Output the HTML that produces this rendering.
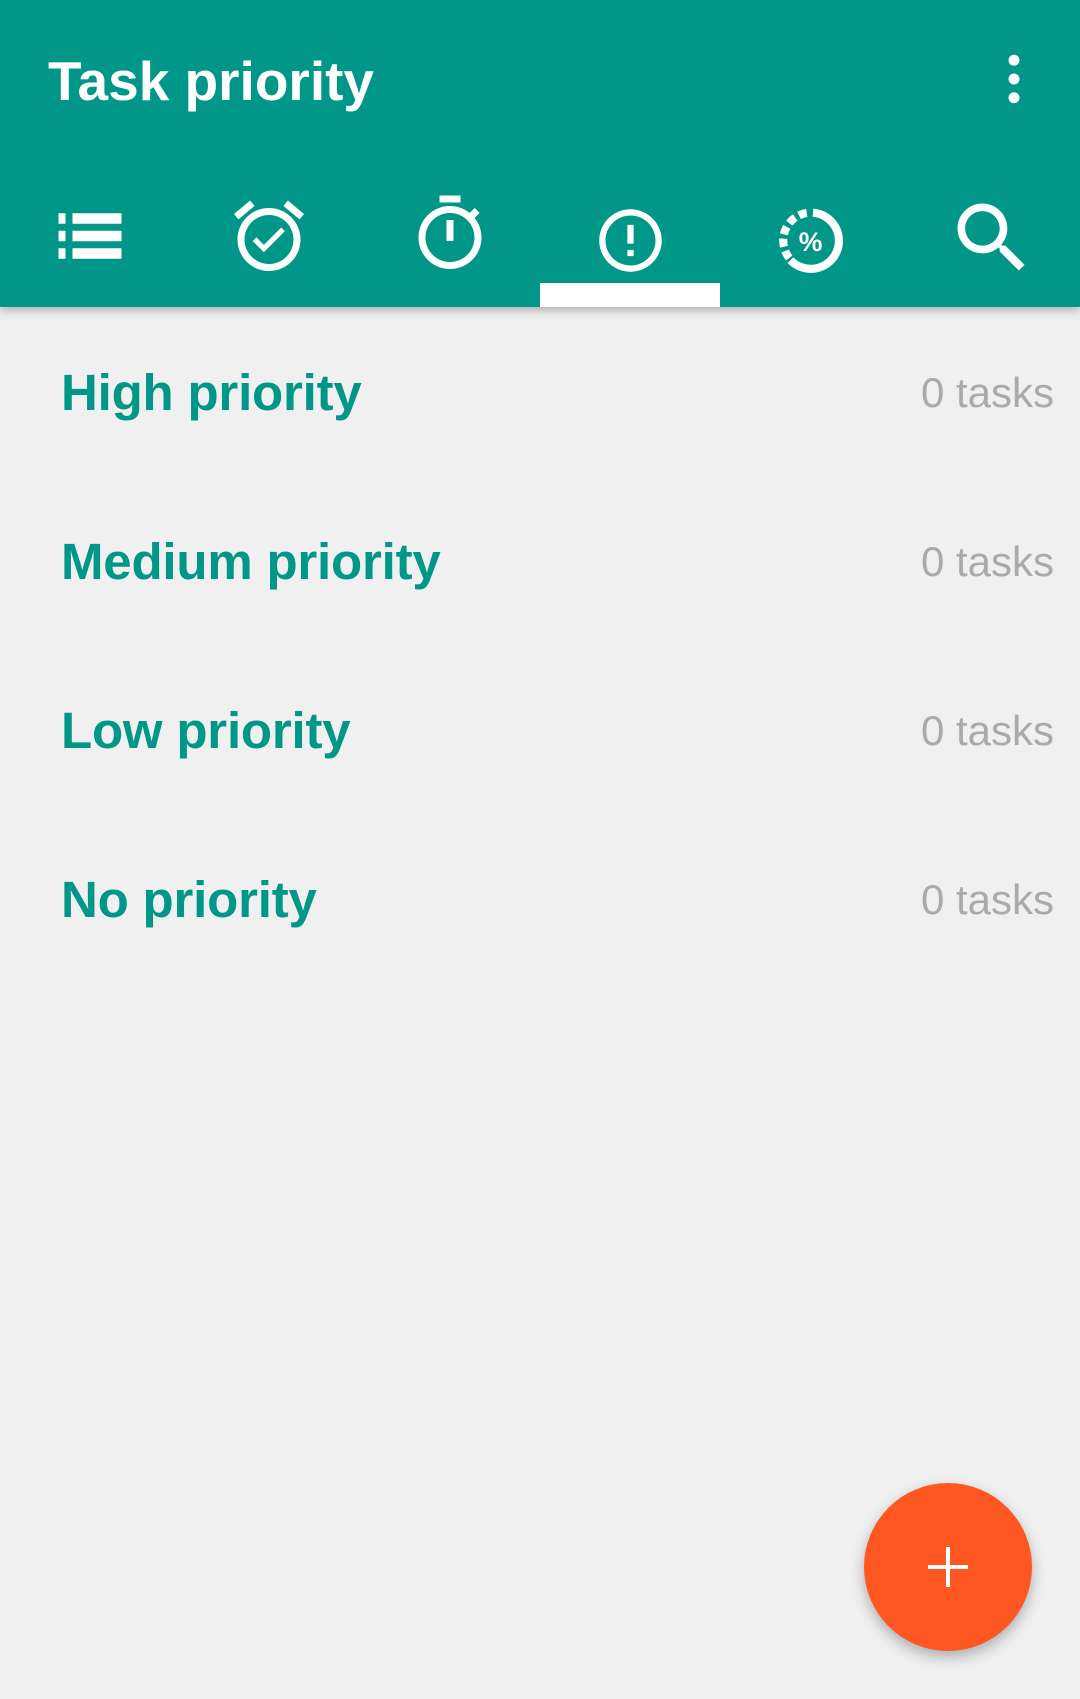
<!DOCTYPE html>
<html><head><meta charset="utf-8"><style>
*{margin:0;padding:0;box-sizing:border-box}
body{width:1080px;height:1699px;background:#f0f0f0;font-family:"Liberation Sans",sans-serif;position:relative;overflow:hidden}
.hdr{position:absolute;left:0;top:0;width:1080px;height:307px;background:#009688;box-shadow:0 4px 8px rgba(0,0,0,.25)}
.title{position:absolute;left:48px;top:46px;font-size:55px;font-weight:bold;color:#fff;line-height:70px}
.ind{position:absolute;left:540px;top:283px;width:180px;height:24px;background:#fff}
svg.i{position:absolute;fill:#fff}
.row{position:absolute;left:0;width:1080px}
.row .l{position:absolute;left:61px;font-size:51px;font-weight:bold;color:#009688;letter-spacing:-0.2px}
.row .r{position:absolute;right:26px;font-size:42px;color:#aaaaaa}
.fab{position:absolute;left:864px;top:1483px;width:168px;height:168px;border-radius:50%;background:#ff5722;box-shadow:0 6px 14px rgba(0,0,0,.28)}
.fab:before{content:"";position:absolute;left:64px;top:82px;width:40px;height:4px;background:#fff}
.fab:after{content:"";position:absolute;left:82px;top:64px;width:4px;height:40px;background:#fff}
</style></head><body>
<div class="hdr">
<div class="title">Task priority</div>
<svg class="i" style="left:984px;top:49px" width="60" height="60" viewBox="0 0 24 24"><circle cx="12" cy="4.5" r="2.2"/><circle cx="12" cy="12" r="2.2"/><circle cx="12" cy="19.5" r="2.2"/></svg>
<svg class="i" style="left:48px;top:194px" width="84" height="84" viewBox="0 0 24 24"><path d="M3 13.5h2v-3H3v3zm0 5h2v-3H3v3zm0-10h2v-3H3v3zm4 5h14v-3H7v3zm0 5h14v-3H7v3zM7 5.5v3h14v-3H7z"/></svg>
<svg class="i" style="left:227px;top:194px" width="84" height="84" viewBox="0 0 24 24"><path d="M22 5.72l-4.6-3.86-1.29 1.53 4.6 3.86L22 5.72zM7.88 3.39L6.6 1.86 2 5.71l1.29 1.53 4.59-3.85zM12 4c-4.97 0-9 4.03-9 9s4.02 9 9 9c4.97 0 9-4.03 9-9s-4.03-9-9-9zm0 16c-3.87 0-7-3.13-7-7s3.13-7 7-7 7 3.13 7 7-3.13 7-7 7zm-1.46-5.47L8.41 12.4l-1.06 1.06 3.18 3.18 6-6-1.06-1.06-4.93 4.95z"/></svg>
<svg class="i" style="left:408px;top:192px" width="84" height="84" viewBox="0 0 24 24"><path d="M15 1H9v2h6V1zm-4 13h2V8h-2v6zm8.03-6.61l1.42-1.42c-.43-.51-.9-.99-1.41-1.41l-1.42 1.42C16.07 4.74 14.12 4 12 4c-4.97 0-9 4.03-9 9s4.02 9 9 9 9-4.03 9-9c0-2.12-.74-4.07-1.97-5.61zM12 20c-3.87 0-7-3.13-7-7s3.13-7 7-7 7 3.13 7 7-3.13 7-7 7z"/></svg>
<svg class="i" style="left:593px;top:203px" width="75" height="75" viewBox="0 0 24 24"><path d="M11 15h2v2h-2zm0-8h2v6h-2zm.99-5C6.47 2 2 6.48 2 12s4.47 10 9.99 10C17.52 22 22 17.52 22 12S17.52 2 11.990 2zM12 20c-4.42 0-8-3.58-8-8s3.58-8 8-8 8 3.58 8 8-3.58 8-8 8z"/></svg>
<svg class="i" style="left:773px;top:203px" width="75" height="75" viewBox="0 0 24 24"><path d="M12.8 3.1A9 9 0 1 1 5.6 18.3" fill="none" stroke="#fff" stroke-width="2.6"/><path d="M5.2 17.6A9 9 0 0 1 11.2 3.1" fill="none" stroke="#fff" stroke-width="2.6" stroke-dasharray="2.6 1.4"/><text x="12" y="15.3" font-size="8.5" font-weight="bold" text-anchor="middle" fill="#fff" font-family="Liberation Sans">%</text></svg>
<svg class="i" style="left:946px;top:192px" width="92" height="92" viewBox="0 0 24 24"><path d="M15.5 14h-.79l-.28-.27C15.41 12.59 16 11.11 16 9.5 16 5.91 13.09 3 9.5 3S3 5.91 3 9.5 5.91 16 9.5 16c1.61 0 3.09-.59 4.23-1.57l.27.28v.79l5 4.99L20.49 19l-4.99-5zm-6 0C7.01 14 5 11.99 5 9.5S7.01 5 9.5 5 14 7.01 14 9.5 11.99 14 9.5 14z"/></svg>
<div class="ind"></div>
</div>
<div class="row" style="top:363px"><span class="l">High priority</span><span class="r" style="top:6px">0 tasks</span></div>
<div class="row" style="top:532px"><span class="l">Medium priority</span><span class="r" style="top:6px">0 tasks</span></div>
<div class="row" style="top:701px"><span class="l">Low priority</span><span class="r" style="top:6px">0 tasks</span></div>
<div class="row" style="top:870px"><span class="l">No priority</span><span class="r" style="top:6px">0 tasks</span></div>
<div class="fab"></div>
</body></html>
